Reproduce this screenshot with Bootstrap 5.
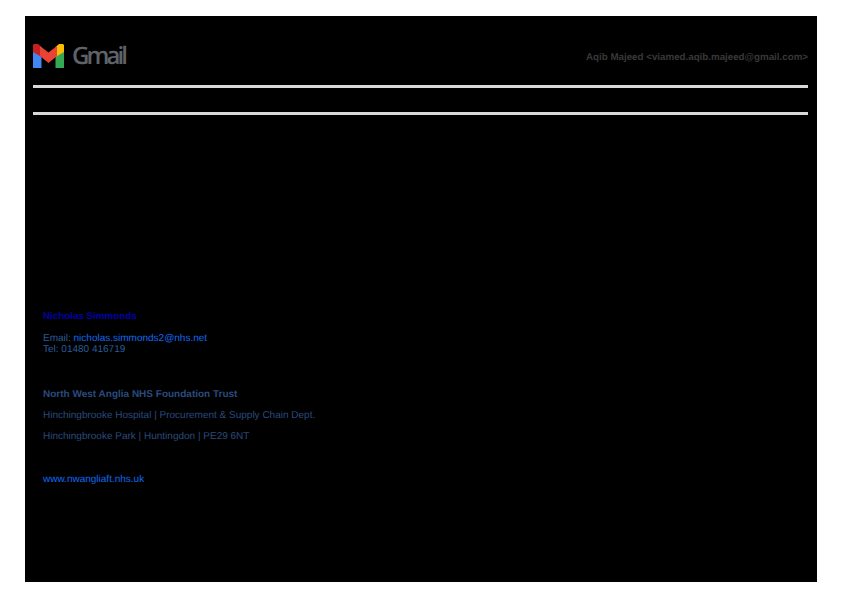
<!DOCTYPE html>
<html lang="en"><head><meta charset="utf-8"><title>Gmail</title>
<link href="https://cdn.jsdelivr.net/npm/bootstrap@5.3.0/dist/css/bootstrap.min.css" rel="stylesheet">
<style>
html,body{height:595px;background:#fff;overflow:hidden}
body{font-family:"Liberation Sans",Arial,sans-serif;padding:16px 25px 13px;text-rendering:geometricPrecision}
.sheet{background:#000;height:566px;padding:26px 9px 0 8px}
.brand{height:28px}
.brand-name{font-family:"Open Sans",sans-serif;font-weight:600;font-size:24px;line-height:28px;color:#5f6368;letter-spacing:-2.9px;margin-left:8px}
.sender{font-size:9.75px;font-weight:700;color:#383838;padding-top:4px}
.rule{height:3px;background:#d8d8d8;border-top:1px solid #9a9a9a;margin:0}
.rule-a{margin-top:15px}
.rule-b{margin-top:24px}
.sig{padding:196px 0 0 10px;font-size:10px;line-height:11px}
.sig-name{font-weight:700;font-size:9.8px;color:#0000a8;height:22px}
.sig-contact{color:#2a5c99;height:56px}
.sig-contact a,.sig-web{color:#1269ee;text-decoration:none}
.sig-org{font-weight:700;color:#2a4b7e;height:21px}
.sig-addr{color:#2a4b7e;height:21px}
.sig-gap{height:22px}
</style></head><body>
<main class="sheet">
<header class="brand d-flex align-items-center justify-content-between">
<div class="d-flex align-items-center">
<svg width="31" height="24" viewBox="0 0 31 24" aria-label="Gmail logo">
<path d="M0 4 L0 24 L8.5 24 L8.5 10Z" fill="#4285f4"/>
<path d="M22.5 10 L22.5 24 L31 24 L31 4Z" fill="#34a853"/>
<path d="M0 1 L0 8 L8.5 13 L8.5 3 L5 0 L1 0Z" fill="#c5221f"/>
<path d="M22.5 3 L22.5 13 L31 8 L31 1 L30 0 L26 0Z" fill="#fbbc04"/>
<path d="M7 2 L15.5 8.5 L24 2 L24 12 L15.5 19 L7 12Z" fill="#ea4335"/>
</svg>
<span class="brand-name">Gmail</span>
</div>
<div class="sender">Aqib Majeed &lt;viamed.aqib.majeed@gmail.com&gt;</div>
</header>
<hr class="rule rule-a opacity-100 border-0">
<hr class="rule rule-b opacity-100 border-0">
<section class="sig">
<div class="sig-name">Nicholas Simmonds</div>
<div class="sig-contact">Email: <a href="#">nicholas.simmonds2@nhs.net</a><br>Tel: 01480 416719</div>
<div class="sig-org">North West Anglia NHS Foundation Trust</div>
<div class="sig-addr">Hinchingbrooke Hospital | Procurement &amp; Supply Chain Dept.</div>
<div class="sig-addr">Hinchingbrooke Park | Huntingdon | PE29 6NT</div>
<div class="sig-gap"></div>
<a class="sig-web" href="#">www.nwangliaft.nhs.uk</a>
</section>
</main>
<script src="https://cdn.jsdelivr.net/npm/bootstrap@5.3.0/dist/js/bootstrap.bundle.min.js"></script>
</body></html>
